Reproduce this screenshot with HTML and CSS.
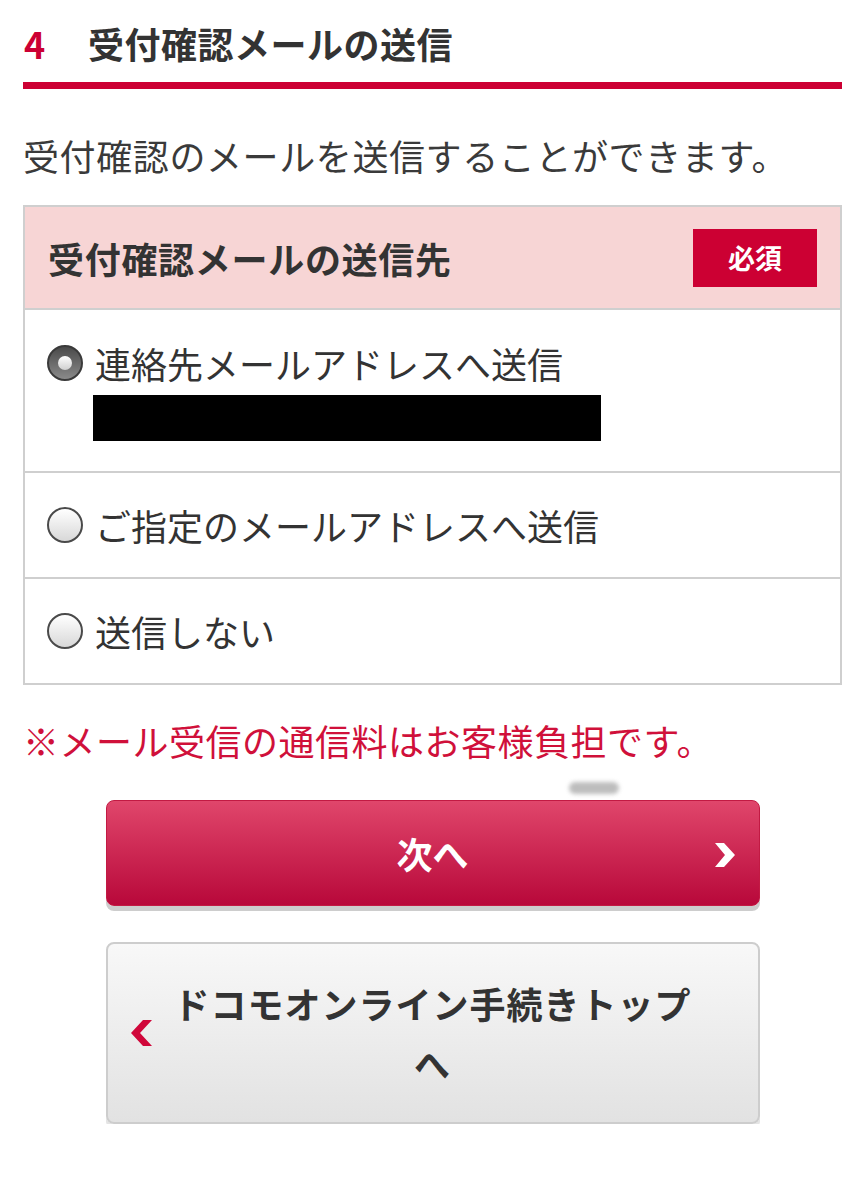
FILE: index.html
```html
<!DOCTYPE html>
<html lang="ja">
<head>
<meta charset="utf-8">
<title>受付確認メールの送信</title>
<link rel="stylesheet" href="styles.css">
</head>
<body>
<div class="page">
  <h2 class="heading"><span class="num">4</span>受付確認メールの送信</h2>
  <p class="lead">受付確認のメールを送信することができます。</p>

  <div class="box">
    <div class="box-head">
      <span class="box-title">受付確認メールの送信先</span>
      <span class="badge">必須</span>
    </div>
    <label class="row">
      <span class="radio checked"></span>
      <span class="row-body">
        <span class="row-text">連絡先メールアドレスへ送信</span>
        <span class="masked"></span>
      </span>
    </label>
    <label class="row">
      <span class="radio"></span>
      <span class="row-body"><span class="row-text">ご指定のメールアドレスへ送信</span></span>
    </label>
    <label class="row last">
      <span class="radio"></span>
      <span class="row-body"><span class="row-text">送信しない</span></span>
    </label>
  </div>

  <p class="note">※メール受信の通信料はお客様負担です。</p>

  <div class="actions">
    <span class="smudge"></span>
    <a class="btn btn-next" href="#">次へ
      <svg class="chev-r" viewBox="0 0 24 26" width="24" height="26"><path d="M2 1 L12 13 L2 25 L11 25 L22 13 L11 1 Z" fill="#fff"/></svg>
    </a>
    <a class="btn btn-back" href="#">
      <svg class="chev-l" viewBox="0 0 24 28" width="24" height="28"><path d="M22 1 L10 14 L22 27 L13 27 L1 14 L13 1 Z" fill="#d0073a"/></svg>
      <span class="back-text">ドコモオンライン手続きトップへ</span>
    </a>
  </div>
</div>
</body>
</html>
```
FILE: styles.css
```css
* { box-sizing: border-box; }
body {
  margin: 0;
  background: #fff;
  font-family: "Noto Sans CJK JP", "Noto Sans", sans-serif;
  color: #333;
}
.page {
  padding: 0 23px;
}
.heading {
  margin: 0;
  padding-top: 21px;
  padding-bottom: 17px;
  font-size: 36px;
  line-height: 44px;
  font-weight: 700;
  color: #333;
  border-bottom: 7px solid #cc0033;
  letter-spacing: 0.5px;
}
.num {
  display: inline-block;
  width: 65px;
  padding-left: 1px;
  color: #cc0033;
  letter-spacing: 0;
}
.lead {
  margin: 42px 0 26px;
  font-size: 36px;
  line-height: 48px;
  color: #3a3a3a;
  font-weight: 400;
  letter-spacing: 0.6px;
}
.box {
  border: 2px solid #cfcfcf;
}
.box-head {
  display: flex;
  align-items: center;
  justify-content: space-between;
  height: 103px;
  padding: 0 23px;
  background: #f7d5d5;
  border-bottom: 2px solid #cfcfcf;
}
.box-title {
  font-size: 36px;
  font-weight: 700;
  color: #333;
  letter-spacing: 0.7px;
}
.badge {
  display: flex;
  align-items: center;
  justify-content: center;
  width: 124px;
  height: 58px;
  background: #cc0033;
  color: #fff;
  font-size: 27px;
  font-weight: 700;
}
.row {
  display: flex;
  align-items: flex-start;
  gap: 12px;
  padding: 28px 22px 28px 22px;
  border-bottom: 2px solid #cfcfcf;
}
.row:first-of-type { padding-top: 29px; padding-bottom: 30px; }
.row.last { border-bottom: 0; }
.radio {
  flex: none;
  width: 36px;
  height: 36px;
  margin-top: 6px;
  border-radius: 50%;
  border: 2px solid #4a4a4a;
  background: linear-gradient(#ffffff, #d8d8d8);
  position: relative;
}
.radio.checked {
  border-color: #3a3a3a;
  background: linear-gradient(#4a4a4a, #8a8a8a);
}
.radio.checked::after {
  content: "";
  position: absolute;
  left: 9px;
  top: 9px;
  width: 14px;
  height: 14px;
  border-radius: 50%;
  background: linear-gradient(#ffffff, #cfcfcf);
}
.row-body {
  display: flex;
  flex-direction: column;
}
.row-text {
  font-size: 36px;
  line-height: 48px;
  color: #333;
}
.masked {
  display: block;
  width: 508px;
  height: 46px;
  margin-top: 8px;
  margin-left: -2px;
  background: #000;
}
.note {
  margin: 31px 0 0;
  font-size: 36px;
  line-height: 48px;
  color: #d0103a;
  letter-spacing: 0.5px;
}
.actions {
  position: relative;
  padding-top: 36px;
  display: flex;
  flex-direction: column;
  align-items: center;
  gap: 36px;
}
.smudge {
  position: absolute;
  left: 546px;
  top: 18px;
  width: 50px;
  height: 12px;
  border-radius: 6px;
  background: #bdbdbd;
  filter: blur(2px);
}
.btn {
  position: relative;
  display: flex;
  align-items: center;
  justify-content: center;
  width: 654px;
  border-radius: 8px;
  text-decoration: none;
  font-weight: 700;
  font-size: 36px;
}
.btn-next {
  height: 106px;
  color: #fff;
  background: linear-gradient(#e0466b, #b8083a);
  border: 1px solid #c21a43;
  box-shadow: 0 5px 0 #cdcdcd;
}
.chev-r {
  position: absolute;
  right: 22px;
  top: 41px;
}
.btn-back {
  height: 182px;
  padding: 0 60px;
  color: #333;
  background: linear-gradient(#f8f8f8, #e2e2e2);
  border: 2px solid #cdcdcd;
  box-shadow: 0 5px 0 #e4e4e4;
}
.back-text {
  text-align: center;
  line-height: 60px;
  letter-spacing: 1px;
}
.chev-l {
  position: absolute;
  left: 22px;
  top: 75px;
}
```
